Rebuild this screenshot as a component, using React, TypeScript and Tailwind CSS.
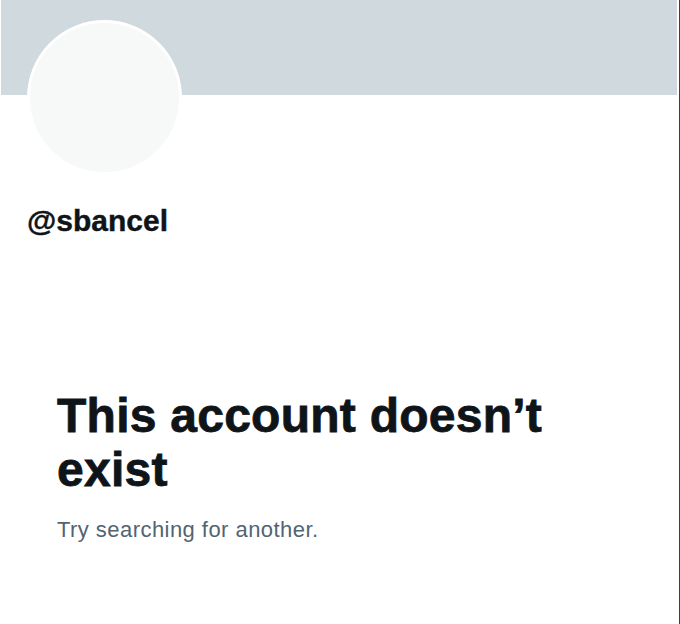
import React from "react";

export default function App() {
  return (
    <div
      className="w-[680px] h-[624px] bg-white flex overflow-hidden"
      style={{ fontFamily: '"Liberation Sans", Arial, sans-serif' }}
    >
      <div className="flex-1 flex flex-col border-r border-[#3f3f3f]">
        <div className="h-[95px] ml-px mr-[2px] bg-[#cfd9de]" />
        <div className="pl-[27px]">
          <div className="-mt-[75px] w-[155px] h-[155px] rounded-full bg-[#f7f9f9] border-[3px] border-white" />
          <div className="mt-[28px] text-[30px] leading-[36px] font-bold text-[#0f1419] [-webkit-text-stroke:0.4px_#0f1419]">
            @sbancel
          </div>
        </div>
        <div className="pl-[57px] mt-[150px] pr-4">
          <h1 className="text-[48px] leading-[54px] font-bold text-[#0f1419] w-[540px] tracking-[0.25px] [-webkit-text-stroke:0.8px_#0f1419]">
            This account doesn’t exist
          </h1>
          <p className="mt-[19px] text-[22px] leading-[28px] tracking-[0.45px] text-[#536471]">
            Try searching for another.
          </p>
        </div>
      </div>
    </div>
  );
}
